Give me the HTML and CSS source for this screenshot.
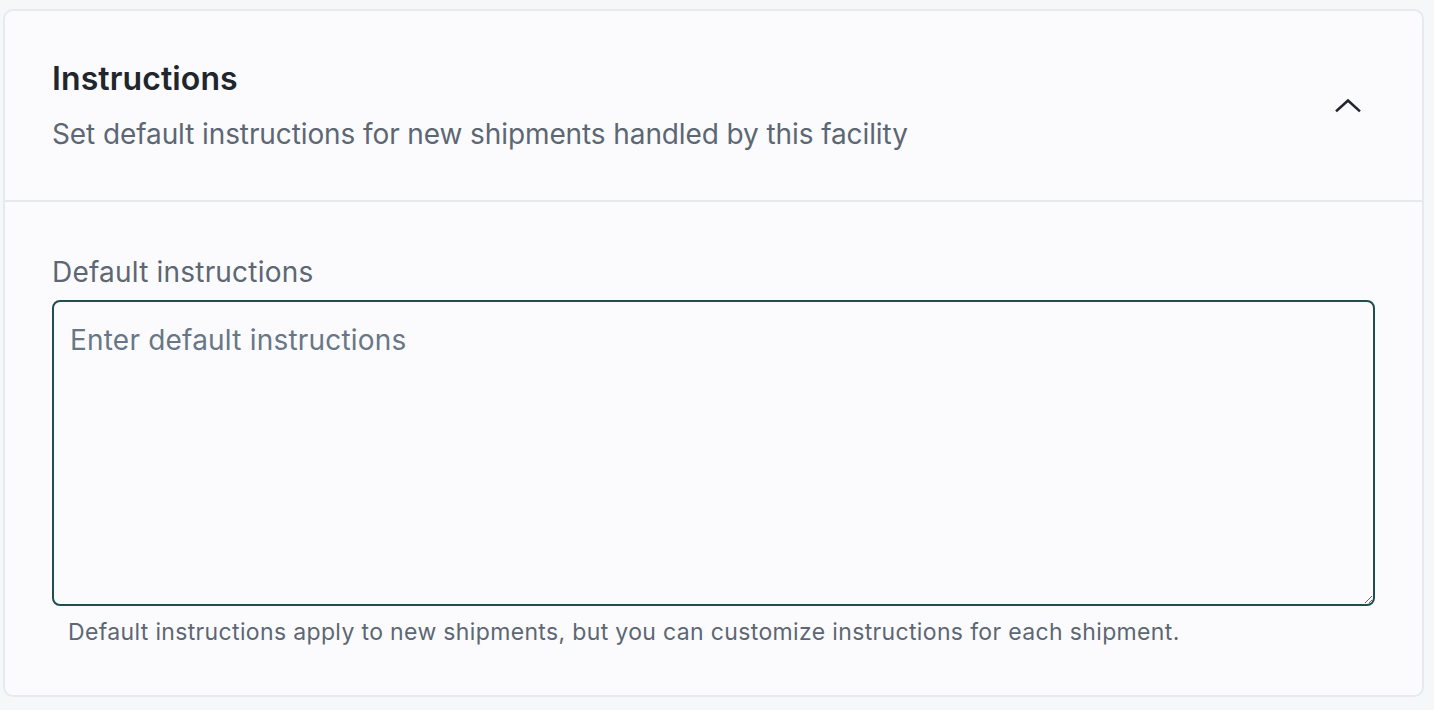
FILE: index.html
```html
<!DOCTYPE html>
<html>
<head>
    <meta charset="UTF-8" />
    <title>Instructions</title>
    <link rel="stylesheet" href="styles.css">
</head>
<body>
    <div class="card">
        <div class="card-header">
            <div class="header-text">
                <h2>Instructions</h2>
                <p class="subtitle">Set default instructions for new shipments handled by this facility</p>
            </div>
            <button type="button" class="toggle" title="Collapse">
                <svg width="28" height="28" viewBox="0 0 28 28" fill="none" stroke="#1f262d" stroke-width="2.6" stroke-linecap="square">
                    <path d="M3 18.5L14 8.5L25 18.5" />
                </svg>
            </button>
        </div>
        <div class="card-body">
            <label for="default-instructions">Default instructions</label>
            <textarea id="default-instructions" placeholder="Enter default instructions"></textarea>
            <p class="hint">Default instructions apply to new shipments, but you can customize instructions for each shipment.</p>
        </div>
    </div>
</body>
</html>
```

FILE: styles.css
```css
body {
    font-family: Inter, "Noto Sans", sans-serif;
    background: #f6f7f9;
    margin: 0;
    padding: 9px 10px 14px 3px;
}
.card {
    background: #fbfbfd;
    border: 2px solid #e6eaef;
    border-radius: 10px;
}
.card-header {
    display: flex;
    align-items: center;
    justify-content: space-between;
    padding: 48px 60px 48px 47px;
    border-bottom: 2px solid #e6eaef;
}
h2 {
    margin: 0;
    font-size: 32px;
    line-height: 40px;
    font-weight: 600;
    color: #1f262d;
    letter-spacing: 0.1px;
}
.subtitle {
    margin: 17px 0 0 0;
    font-size: 28px;
    line-height: 36px;
    letter-spacing: -0.1px;
    color: #5d6773;
}
.toggle {
    background: none;
    border: none;
    padding: 0;
    cursor: pointer;
    display: flex;
}
.card-body {
    padding: 52px 47px 48px 47px;
}
label {
    display: block;
    font-size: 28px;
    line-height: 36px;
    color: #5d6773;
    letter-spacing: 0.2px;
    margin-bottom: 10px;
}
textarea {
    display: block;
    box-sizing: border-box;
    width: 100%;
    height: 306px;
    padding: 20px 16px;
    border: 2px solid #1e4f4d;
    border-radius: 8px;
    background: #fbfbfd;
    font-family: inherit;
    font-size: 28px;
    line-height: 36px;
    letter-spacing: 0.2px;
    color: #1f262d;
    outline: none;
}
textarea::placeholder {
    color: #687787;
}
.hint {
    margin: 11px 0 0 16px;
    font-size: 23px;
    line-height: 30px;
    letter-spacing: 0.35px;
    color: #5d6773;
}
```
